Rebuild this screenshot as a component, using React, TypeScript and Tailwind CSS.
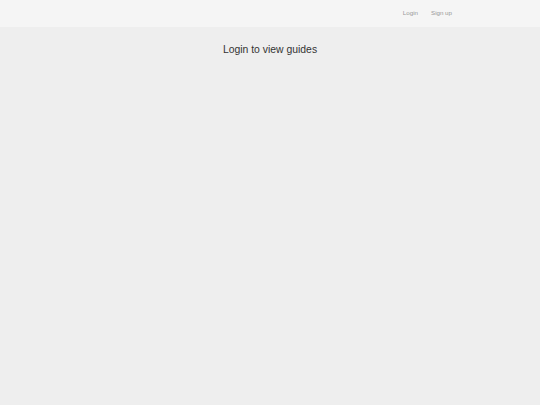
export default function App() {
  return (
    <div className="min-h-screen bg-[#eeeeee] font-[family-name:Liberation_Sans,Arial,sans-serif]">
      {/* Barra superior */}
      <header className="h-[27px] bg-[#f5f5f5] flex items-center justify-end pr-[88px]">
        <nav className="flex items-center gap-[13px] text-[6.2px] text-[#999999] -mt-px">
          <a href="#">Login</a>
          <a href="#">Sign up</a>
        </nav>
      </header>

      <main className="flex justify-center pt-[15px]">
        <h1 className="text-[10.4px] text-[#333333]">Login to view guides</h1>
      </main>
    </div>
  );
}
